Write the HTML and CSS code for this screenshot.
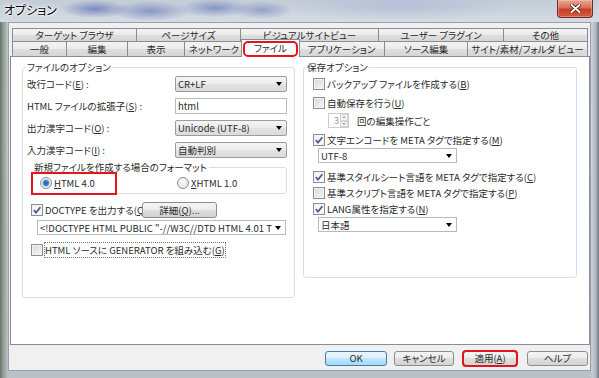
FILE: index.html
```html
<!DOCTYPE html>
<html lang="ja">
<head>
  <meta charset="UTF-8">
  <title>オプション</title>
  <meta name="viewport" content="width=device-width, initial-scale=1.0">
  <link rel="stylesheet" href="styles.css">
</head>
<body>
  <div class="window">
    <!-- タイトルバー -->
    <div class="titlebar">
      <span class="title">オプション</span>
      <span class="close-btn">
        <svg width="11" height="9" viewBox="0 0 11 9"><path d="M1.5 1 L9.5 8 M9.5 1 L1.5 8" stroke="#3a1410" stroke-width="3.4" stroke-linecap="round"/><path d="M1.5 1 L9.5 8 M9.5 1 L1.5 8" stroke="#fff" stroke-width="2" stroke-linecap="round"/></svg>
      </span>
    </div>

    <div class="client">
      <!-- タブ -->
      <div class="tabs">
        <div class="tab-row back">
          <span class="tab">ターゲット ブラウザ</span>
          <span class="tab">ページサイズ</span>
          <span class="tab">ビジュアルサイトビュー</span>
          <span class="tab">ユーザー プラグイン</span>
          <span class="tab">その他</span>
        </div>
        <div class="tab-row front">
          <span class="tab">一般</span>
          <span class="tab">編集</span>
          <span class="tab">表示</span>
          <span class="tab">ネットワーク</span>
          <span class="tab active">ファイル</span>
          <span class="tab">アプリケーション</span>
          <span class="tab">ソース編集</span>
          <span class="tab">サイト/素材/フォルダ ビュー</span>
        </div>
      </div>

      <div class="panel">
        <!-- ファイルのオプション -->
        <fieldset class="group group-file">
          <legend>ファイルのオプション</legend>
          <div class="field-grid">
            <span>改行コード(<u>E</u>) :</span>
            <div class="combo"><span>CR+LF</span><i class="arrow"></i></div>
            <span>HTML ファイルの拡張子(<u>S</u>) :</span>
            <div class="combo edit"><span>html</span></div>
            <span>出力漢字コード(<u>O</u>) :</span>
            <div class="combo"><span>Unicode (UTF-8)</span><i class="arrow"></i></div>
            <span>入力漢字コード(<u>I</u>) :</span>
            <div class="combo"><span>自動判別</span><i class="arrow"></i></div>
          </div>

          <fieldset class="subgroup">
            <legend>新規ファイルを作成する場合のフォーマット</legend>
            <div class="radio-row">
              <span class="radio marked"><i class="dot on"></i><span><u>H</u>TML 4.0</span></span>
              <span class="radio"><i class="dot"></i><span><u>X</u>HTML 1.0</span></span>
            </div>
          </fieldset>

          <div class="doctype-row">
            <span class="check-row"><i class="check on"><svg viewBox="0 0 10 10"><path d="M1.8 5.2 L4 7.6 L8.4 2.2" fill="none" stroke="#4a5f8c" stroke-width="1.8"/></svg></i><span>DOCTYPE を出力する(<u>Q</u></span></span>
            <button class="btn small">詳細(<u>Q</u>)...</button>
          </div>
          <div class="combo edit doctype"><span>&lt;!DOCTYPE HTML PUBLIC "-//W3C//DTD HTML 4.01 T</span><i class="arrow"></i></div>
          <div class="check-row generator"><i class="check"></i><span class="focus">HTML ソースに GENERATOR を組み込む(<u>G</u>)</span></div>
        </fieldset>

        <!-- 保存オプション -->
        <fieldset class="group group-save">
          <legend>保存オプション</legend>
          <div class="save-list">
            <div class="check-row r1"><i class="check"></i><span>バックアップ ファイルを作成する(<u>B</u>)</span></div>
            <div class="check-row r2"><i class="check"></i><span>自動保存を行う(<u>U</u>)</span></div>
            <div class="spin-row">
              <span class="spin"><span class="spin-val">3</span><span class="spin-btns"><i class="up"></i><i class="down"></i></span></span>
              <span>回の編集操作ごと</span>
            </div>
            <div class="check-row r3"><i class="check on"><svg viewBox="0 0 10 10"><path d="M1.8 5.2 L4 7.6 L8.4 2.2" fill="none" stroke="#4a5f8c" stroke-width="1.8"/></svg></i><span>文字エンコードを META タグで指定する(<u>M</u>)</span></div>
            <div class="combo edit small-combo"><span>UTF-8</span><i class="arrow"></i></div>
            <div class="check-row r4"><i class="check on"><svg viewBox="0 0 10 10"><path d="M1.8 5.2 L4 7.6 L8.4 2.2" fill="none" stroke="#4a5f8c" stroke-width="1.8"/></svg></i><span>基準スタイルシート言語を META タグで指定する(<u>C</u>)</span></div>
            <div class="check-row r5"><i class="check"></i><span>基準スクリプト言語を META タグで指定する(<u>P</u>)</span></div>
            <div class="check-row r6"><i class="check on"><svg viewBox="0 0 10 10"><path d="M1.8 5.2 L4 7.6 L8.4 2.2" fill="none" stroke="#4a5f8c" stroke-width="1.8"/></svg></i><span>LANG属性を指定する(<u>N</u>)</span></div>
            <div class="combo edit small-combo"><span>日本語</span><i class="arrow"></i></div>
          </div>
        </fieldset>
      </div>

      <!-- ボタン -->
      <div class="button-row">
        <button class="btn default w-ok">OK</button>
        <button class="btn w-cancel">キャンセル</button>
        <button class="btn w-apply marked">適用(<u>A</u>)</button>
        <button class="btn w-help">ヘルプ</button>
      </div>
    </div>
  </div>
</body>
</html>
```

FILE: styles.css
```css
* { box-sizing: border-box; }
html, body { margin: 0; padding: 0; }
body {
  width: 599px; height: 378px;
  overflow: hidden;
  font-family: "Noto Sans CJK JP", "Liberation Sans", sans-serif;
  font-size: 9.5px;
  font-weight: 400;
  font-feature-settings: "palt";
  color: #2a2a2a;
  background: #8a948f;
}
u { text-decoration-thickness: 1px; text-underline-offset: 1px; }

.window {
  width: 599px; height: 378px;
  display: flex; flex-direction: column;
  background:
    linear-gradient(90deg, #66726a 0, #8f9a92 3px, #b3bcb8 7px, transparent 8px, transparent 591px, #c8ced4 592px, #aeb6bd 596px, #6f777e 599px),
    linear-gradient(180deg, #c8d0da 0, #cfd6de 40%, #b9c1c6 100%);
}

/* タイトルバー */
.titlebar {
  height: 22px;
  display: flex; justify-content: space-between; align-items: flex-start;
  padding: 0 6px 0 4px;
  background:
    radial-gradient(34px 9px at 95px 9px, rgba(60,80,170,.55), transparent),
    radial-gradient(40px 10px at 150px 11px, rgba(70,90,175,.5), transparent),
    radial-gradient(36px 9px at 215px 8px, rgba(70,90,175,.5), transparent),
    radial-gradient(30px 9px at 262px 10px, rgba(80,100,180,.45), transparent),
    radial-gradient(120px 14px at 400px 6px, rgba(150,160,210,.35), transparent),
    linear-gradient(180deg, #c3ccd7, #d4dbe3);
}
.title {
  font-size: 12px; line-height: 20px; color: #000;
  text-shadow: 0 0 5px #fff, 0 0 3px #fff, 0 0 2px #fff;
}
.close-btn {
  width: 36px; height: 18px;
  display: flex; align-items: center; justify-content: center;
  border: 1px solid #6b2a22; border-top: none;
  border-radius: 0 0 4px 4px;
  background: linear-gradient(180deg, #eaa898, #dc6d57 45%, #c73e25 55%, #d45a3f);
  box-shadow: inset 0 0 0 1px rgba(255,220,210,.35);
}

/* クライアント領域 */
.client {
  flex: 1;
  margin: 0 8px 7px 8px;
  background: #f0f0f0;
  border: 1px solid #98a1aa;
  padding: 5px 0 0 1px;
  display: flex; flex-direction: column;
}

.tabs { margin: 0 2px; }
.tab-row { display: grid; }
.tab-row.back { grid-template-columns: 124px 104px 138px 125px 85px; height: 13px; }
.tab-row.front { grid-template-columns: 54px 61px 57px 59px 55px 86px 83px 121px; height: 15px; }
.tab {
  border: 1px solid #898c95; border-bottom: 0; border-right: 0;
  background: linear-gradient(180deg, #f3f3f3, #ebebeb 50%, #dedede 50%, #d6d6d6);
  text-align: center; white-space: nowrap; overflow: hidden;
}
.tab:last-child { border-right: 1px solid #898c95; }
.back .tab { line-height: 12px; }
.front .tab { line-height: 14px; }
.tab.active {
  position: relative; z-index: 2;
  margin: -2px -2px -1px;
  border-right: 1px solid #898c95;
  background: #fff;
  overflow: visible;
  line-height: 17px;
}
.tab.active::after {
  content: "";
  position: absolute; left: 1px; right: 1px; top: 1px; bottom: 0;
  border: 2px solid #e5141c; border-radius: 5px;
}

.panel {
  height: 289px;
  border: 1px solid #898c95;
  background: #fff;
  padding: 4px 12px 0 11px;
  display: grid;
  grid-template-columns: 273px 274px;
  column-gap: 8px;
  align-items: start;
}

/* グループ */
.group {
  margin: 0; min-width: 0;
  border: 1px solid #d5dfe5; border-radius: 3px;
}
.group legend { padding: 0 1px; line-height: 12px; margin-left: -1px; }
.group-file { height: 237px; padding: 3px 7px 0 4px; }
.group-save { height: 217px; padding: 3px 7px 0 3px; }

.field-grid {
  display: grid;
  grid-template-columns: 1fr 112px;
  grid-auto-rows: 16px;
  row-gap: 6px;
  align-items: center;
}

.combo {
  height: 16px;
  display: flex; align-items: center; justify-content: space-between;
  padding: 0 4px 0 2px;
  border: 1px solid #9c9c9c; border-radius: 2px;
  background: linear-gradient(180deg, #f4f4f4, #ececec 50%, #e2e2e2 50%, #dcdcdc);
  white-space: nowrap; overflow: hidden;
}
.combo > span { overflow: hidden; }
.combo.edit { background: #fff; border-color: #b5b9c0; border-radius: 0; }
.arrow {
  flex: none;
  width: 0; height: 0; margin-left: 3px;
  border-left: 3.5px solid transparent;
  border-right: 3.5px solid transparent;
  border-top: 4px solid #000;
}

.subgroup {
  margin: 3px 0 0 5px; min-width: 0;
  border: 1px solid #d5dfe5; border-radius: 3px;
  padding: 3px 4px 4px 0;
}
.subgroup legend { padding: 0 2px; line-height: 12px; }
.radio-row { display: grid; grid-template-columns: 137px auto; margin-left: 7px; height: 13px; align-items: center; }
.radio { display: flex; align-items: center; gap: 2px; position: relative; }
.radio.marked::after {
  content: "";
  position: absolute; left: -9px; top: -4px; right: 60px; bottom: -5px;
  border: 2px solid #e5141c;
}
.dot {
  width: 12px; height: 12px; flex: none;
  border: 1px solid #8e8f8f; border-radius: 50%;
  background: radial-gradient(circle at 45% 40%, #fdfdfd, #dcdcdc);
}
.dot.on {
  background: radial-gradient(circle, #1f5fa8 0, #3a7fce 2.4px, #9cc4ec 3.4px, #eaeaea 4px, #f8f8f8 100%);
}

.check {
  width: 12px; height: 12px; flex: none;
  display: inline-flex; align-items: center; justify-content: center;
  border: 1px solid #8e8f8f;
  background: linear-gradient(135deg, #d8d8d8, #f6f6f6);
  box-shadow: inset 0 0 0 1px #f2f2f2;
}
.check.on { background: linear-gradient(135deg, #f0f0f0, #fff); }
.check svg { width: 10px; height: 10px; }
.check-row { display: flex; align-items: center; gap: 2px; height: 15px; white-space: nowrap; }

.doctype-row {
  display: grid; grid-template-columns: 111px 75px;
  align-items: center; height: 16px;
  margin: 8px 0 0 4px;
}
.combo.doctype { width: 249px; height: 15px; margin: 2px 0 0 10px; }
.generator { margin: 7px 0 0 4px; }
.focus { outline: 1px dotted #777; outline-offset: 0; }

.save-list { margin-left: 6px; display: flex; flex-direction: column; }
.save-list .r2 { margin-top: 4px; }
.save-list .r3 { margin-top: 4px; }
.save-list .r4 { margin-top: 6px; }
.save-list .r5, .save-list .r6 { margin-top: 1px; }
.small-combo { width: 139px; height: 15px; margin: 1px 0 0 5px; }

.spin-row { display: flex; align-items: center; gap: 8px; margin: 3px 0 0 15px; height: 15px; }
.spin {
  width: 21px; height: 15px;
  display: flex;
  border: 1px solid #c9ccd2; background: #fff;
}
.spin-val { flex: 1; text-align: right; color: #9a9a9a; line-height: 13px; padding-right: 1px; }
.spin-btns { width: 8px; display: flex; flex-direction: column; }
.spin-btns i {
  flex: 1; display: flex; align-items: center; justify-content: center;
  border: 1px solid #d6d6d6; background: #f4f4f4;
}
.spin-btns .up::before, .spin-btns .down::before {
  content: ""; width: 0; height: 0;
  border-left: 2px solid transparent; border-right: 2px solid transparent;
}
.spin-btns .up::before { border-bottom: 2px solid #a8a8a8; }
.spin-btns .down::before { border-top: 2px solid #a8a8a8; }

/* ボタン */
.btn {
  height: 15px; padding: 0;
  font: inherit; line-height: 13px; color: #2a2a2a;
  border: 1px solid #8d8d8d; border-radius: 3px;
  background: linear-gradient(180deg, #f4f4f4, #ececec 50%, #dfdfdf 50%, #d3d3d3);
  text-align: center; white-space: nowrap;
}
.btn.small { height: 16px; width: 75px; }
.btn.default {
  border-color: #3c7fb1;
  background: linear-gradient(180deg, #eaf6fd, #d9f0fc 50%, #bee6fd 50%, #a7d9f5);
}
.button-row { display: flex; justify-content: flex-end; margin-top: 6px; padding-right: 2px; }
.w-ok { width: 62px; }
.w-cancel { width: 60px; margin-left: 7px; }
.w-apply { width: 54px; margin-left: 9px; position: relative; }
.w-help { width: 61px; margin-left: 10px; }
.btn.marked::after {
  content: "";
  position: absolute; left: -2px; right: -2px; top: -2px; bottom: -2px;
  border: 2px solid #e5141c; border-radius: 4px;
}
```
